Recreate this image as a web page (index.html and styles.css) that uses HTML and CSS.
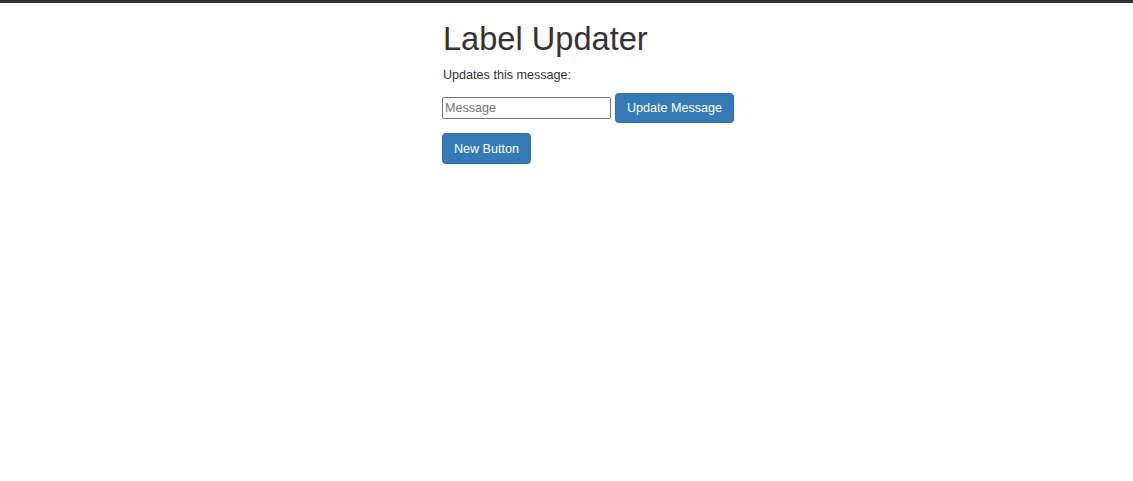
FILE: index.html
```html
<!DOCTYPE html>
<html lang="en">

<head>
    <meta charset="UTF-8">
    <meta name="viewport" content="width=device-width, initial-scale=1.0">
    <title>Label Updater</title>
    <link rel="stylesheet" href="styles.css">
</head>

<body>
    <div class="app">
        <h1 class="title">Label Updater</h1>
        <p id="label" class="label-text">Updates this message:</p>

        <div class="update-row">
            <input type="text" id="message" class="message-input" placeholder="Message">
            <button type="button" id="updateButton" class="btn btn-primary">Update Message</button>
        </div>

        <div class="button-row">
            <button type="button" class="btn btn-primary">New Button</button>
        </div>
    </div>

    <script>
        document.getElementById('updateButton').addEventListener('click', () => {
            const value = document.getElementById('message').value;
            if (value) {
                document.getElementById('label').textContent = value;
            }
        });
    </script>
</body>

</html>
```

FILE: styles.css
```css
/* Basic reset */
* {
    margin: 0;
    padding: 0;
    box-sizing: border-box;
}

body {
    font-family: 'Liberation Sans', Arial, sans-serif;
    font-size: 12.6px;
    line-height: 18px;
    color: #333333;
    background-color: #ffffff;
    border-top: 3px solid #333333;
}

.app {
    width: 249px;
    margin: 0 auto;
    padding-left: 1px;
}

.title {
    font-size: 32.6px;
    font-weight: 500;
    line-height: 35.6px;
    margin-top: 18px;
    margin-bottom: 9px;
    white-space: nowrap;
}

.label-text {
    margin-bottom: 9px;
}

.update-row {
    display: flex;
    align-items: center;
    gap: 4px;
    margin-left: -1px;
    margin-bottom: 9.8px;
    white-space: nowrap;
}

.button-row {
    margin-left: -1px;
}

.message-input {
    flex: none;
    width: 169px;
    height: 22px;
    padding: 1px 2px;
    font-family: inherit;
    font-size: 12.6px;
    line-height: 18px;
    color: #333333;
    border: 1px solid #767676;
    border-radius: 2px;
}

.message-input::placeholder {
    color: #757575;
}

.btn {
    flex: none;
    display: inline-block;
    padding: 5.4px 10.9px;
    font-family: inherit;
    font-size: 12.6px;
    line-height: 18px;
    border: 1px solid transparent;
    border-radius: 3.6px;
    cursor: pointer;
    white-space: nowrap;
}

.btn-primary {
    color: #ffffff;
    background-color: #337ab7;
    border-color: #2e6da4;
}

.btn-primary:hover {
    background-color: #286090;
    border-color: #204d74;
}
```
